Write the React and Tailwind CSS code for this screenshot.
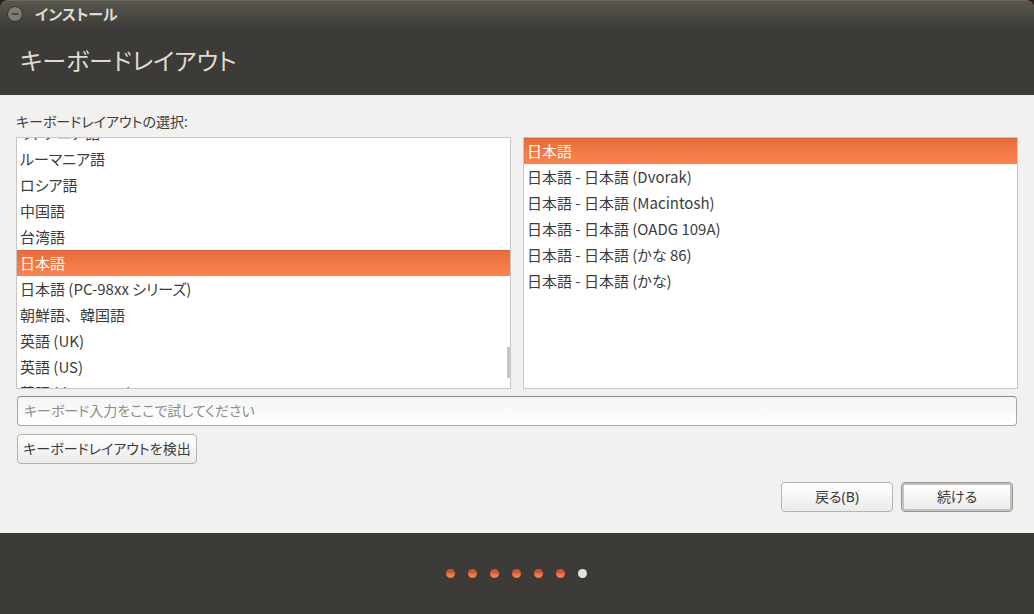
import React, { useState } from "react";

const LANGUAGES = [
  "リトアニア語",
  "ルーマニア語",
  "ロシア語",
  "中国語",
  "台湾語",
  "日本語",
  "日本語 (PC-98xx シリーズ)",
  "朝鮮語、韓国語",
  "英語 (UK)",
  "英語 (US)",
  "英語 (カメルーン)",
];

const VARIANTS = [
  "日本語",
  "日本語 - 日本語 (Dvorak)",
  "日本語 - 日本語 (Macintosh)",
  "日本語 - 日本語 (OADG 109A)",
  "日本語 - 日本語 (かな 86)",
  "日本語 - 日本語 (かな)",
];

function OptionList({ label, items, value, onChange, className = "" }) {
  return (
    <ul
      role="listbox"
      aria-label={label}
      className={"font-['Noto_Sans_CJK_JP',sans-serif] text-[15px] " + className}
    >
      {items.map((item) => (
        <li key={item} role="option" aria-selected={item === value}>
          <button
            type="button"
            onClick={() => onChange(item)}
            className={
              "flex h-[26px] w-full border-t pl-[3px] text-left leading-[23px] " +
              (item.includes("、") ? "[font-feature-settings:normal] " : "") +
              (item === value
                ? "border-[#e2622f] bg-linear-to-b from-[#ea6c3a] to-[#f98353] text-white"
                : "border-transparent")
            }
          >
            {item}
          </button>
        </li>
      ))}
    </ul>
  );
}

function Dot({ done }) {
  return (
    <span
      className={
        "size-[9px] rounded-full " +
        (done ? "bg-linear-to-b from-[#dd5020] from-30% to-[#e98055] to-70%" : "bg-[#e2e2e0]")
      }
    />
  );
}

export default function App() {
  const [language, setLanguage] = useState("日本語");
  const [variant, setVariant] = useState("日本語");
  return (
    <div className="flex min-h-screen flex-col bg-[#f2f1f0] font-['Noto_Sans','Noto_Sans_CJK_JP',sans-serif] text-[14px] text-[#3c3c3c] [font-feature-settings:'palt']">
      <div className="bg-[#2a1a1c]">
        <div className="flex h-7 items-center gap-3 rounded-t-lg border-t border-[#6b6960] bg-linear-to-b from-[#59574e] to-[#3c3b37] px-[7px] pb-px text-[#dfdbd2]">
          <button type="button" aria-label="最小化">
            <svg viewBox="0 0 16 16" className="size-4">
              <circle cx="8" cy="8" r="7.5" fill="#7d7b75" stroke="#35342f" />
              <path d="M4.5 8h7" stroke="#3a3935" strokeWidth="1.4" />
            </svg>
          </button>
          <span className="text-[15px] font-bold">インストール</span>
        </div>
      </div>
      <header className="flex h-[67px] items-center bg-[#3c3b37] px-5 pb-0.5 text-[#dfdbd2]">
        <h1 className="text-[24px]">キーボードレイアウト</h1>
      </header>
      <main className="flex grow flex-col px-4 pt-4">
        <p className="h-[26px] leading-[22px]">キーボードレイアウトの選択:</p>
        <div className="grid grid-cols-2 gap-3">
          <div className="relative h-[252px] overflow-hidden border border-[#c9c6c2] bg-white">
            <OptionList label="言語" items={LANGUAGES} value={language} onChange={setLanguage} className="-mt-[18px]" />
            <span className="absolute right-0 bottom-[10px] h-[31px] w-[3px] bg-[#c8c6c3]" />
          </div>
          <div className="h-[252px] overflow-hidden border border-[#c9c6c2] bg-white">
            <OptionList label="配列" items={VARIANTS} value={variant} onChange={setVariant} />
          </div>
        </div>
        <input
          type="text"
          aria-label="キーボード入力テスト"
          placeholder="キーボード入力をここで試してください"
          className="mx-px mt-[7px] h-[30px] rounded border border-[#a9a7a3] border-t-[#8d8b87] bg-linear-to-b from-[#f5f5f5] to-white px-[6px] pb-0.5 placeholder:text-[#8b8b8b]"
        />
        <div className="mx-px mt-2 flex">
          <button type="button" className="h-[30px] w-[180px] rounded border border-[#b5b3af] bg-linear-to-b from-white to-[#ebebea] pb-0.5">
            キーボードレイアウトを検出
          </button>
        </div>
        <div className="mt-[18px] mr-[5px] flex justify-end gap-2 pb-[21px]">
          <button type="button" className="h-[30px] w-28 rounded border border-[#b5b3af] bg-linear-to-b from-white to-[#ebebea] pb-0.5">
            戻る(B)
          </button>
          <button type="button" className="h-[30px] w-28 rounded border border-[#999793] bg-linear-to-b from-white to-[#ebebea] pb-0.5 ring-2 ring-[#c4c2bf] ring-inset">
            続ける
          </button>
        </div>
      </main>
      <footer className="flex h-[81px] items-center justify-center gap-[13px] bg-[#3c3b37] pr-0.5">
        {[1, 2, 3, 4, 5, 6, 7].map((n) => (
          <Dot key={n} done={n < 7} />
        ))}
      </footer>
    </div>
  );
}
